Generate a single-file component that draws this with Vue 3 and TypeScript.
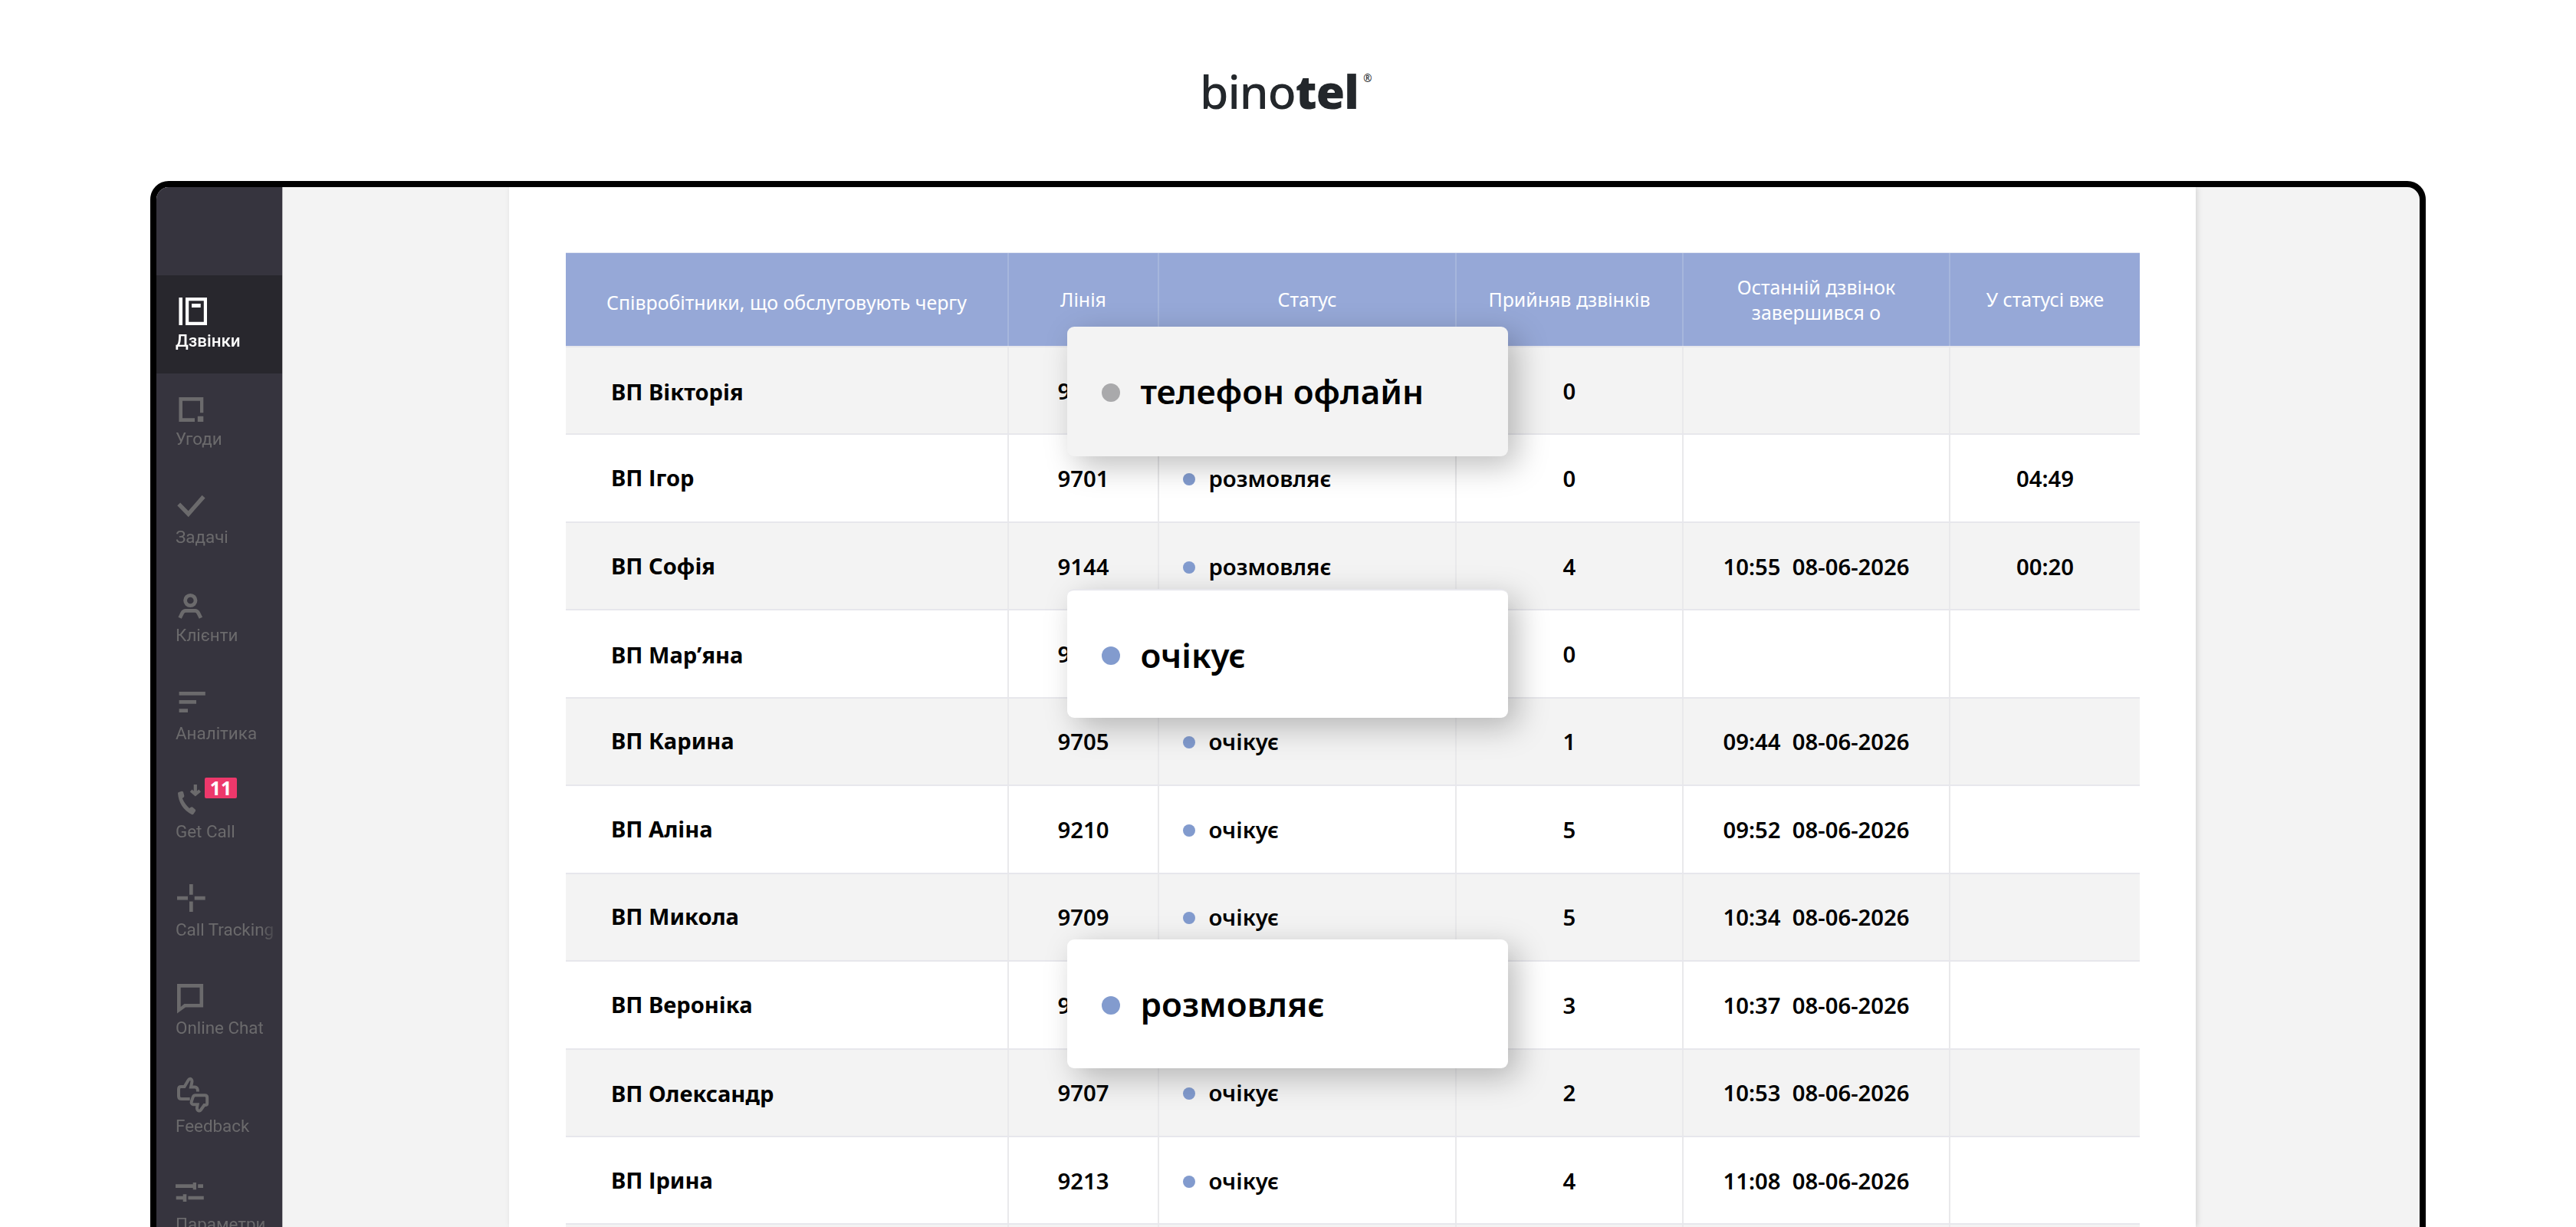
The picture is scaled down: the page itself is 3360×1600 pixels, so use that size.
<script setup lang="ts">
interface MenuItem {
  label: string
  icon: string
  stroke?: number
  active?: boolean
  badge?: string
}

interface Employee {
  name: string
  line: string
  status: string
  calls: string
  last: string
  since: string
  nudge: number
}

interface Callout {
  label: string
  top: number
  height: number
  tone: 'offline' | 'ready' | 'talking'
}

// Icons with a stroke value are outlined, all others are filled.
const menu: MenuItem[] = [
  { label: 'Дзвінки', active: true, icon: 'M5.4 9H10V45H5.4ZM14 9H42V45H14ZM18.2 13.3V40.7H37.8V13.3ZM22 17H33.7V22H22Z' },
  { label: 'Угоди', icon: 'M5.4 11H37.3V31.3H33V15.7H10V38.3H26V43H5.4ZM29.8 35.7H37.3V43H29.8Z' },
  { label: 'Задачі', stroke: 5.4, icon: 'M5.2 22.4L17.7 35.2L37.6 12.6' },
  { label: 'Клієнти', stroke: 4.8, icon: 'M27 20a6.7 6.7 0 1 1-13.4 0a6.7 6.7 0 1 1 13.4 0ZM6.6 42.7L9.6 36.6Q11.2 33.4 14 33.4H26.5Q29.3 33.4 30.9 36.6L33.9 42.7' },
  { label: 'Аналітика', icon: 'M5.6 11H39.8V15.7H5.6ZM5.6 22H28V26.7H5.6ZM5.6 33.3H17V38H5.6Z' },
  { label: 'Get Call', badge: '11', icon: 'M4 15.5Q4 14.4 5.2 14L9 12.8Q10.6 12.6 11.2 14.2L12.4 19Q12.4 20.4 9.8 22Q13 29.5 19 35Q21.4 32.4 23.2 33.6L26.6 36.6Q27.5 37.6 26.9 38.8L24.4 42.6Q23.5 43.7 22 43Q5.6 34.5 4 15.5ZM24.7 4H28.9V12.6L31.4 10.6L34 13.4L26.8 19.6L19.8 13.4L22.4 10.6L24.7 12.6Z' },
  { label: 'Call Tracking', icon: 'M19 6H23.7V19.8H19ZM19 28.6H23.7V42H19ZM3 21.7H17V26.6H3ZM25.7 21.7H39.7V26.6H25.7Z' },
  { label: 'Online Chat', icon: 'M3 8H37.1V38.6H14L3 46.6ZM7.7 12.7V38L12.3 34H32.5V12.7Z' },
  { label: 'Feedback', stroke: 4, icon: 'M19.7 30H9Q5 30 5 26.4V17.2Q5 14 8.2 14H12.6L17.6 5.6Q19.6 2.6 21.6 4.6Q22.8 6 22.3 8.4L21 14.6H26.4Q30 15 30 20.4M27 25.2H39Q42.2 25.2 42.2 28.2V35.4Q42.2 38 39.6 38H38.4L34 44.2Q32 46.8 29.8 44.6Q28.6 43.2 29 41L29.7 37.2H24.2Q21 36.8 21.8 33.4L23.6 27.8Q24.4 25.2 27 25.2Z' },
  { label: 'Параметри', icon: 'M1 13.3H23.7V11H28V20.2H23.7V18H1ZM30.2 13.3H37V18H30.2ZM1.7 28.7H10.7V26.3H15.3V36H10.7V33.3H1.7ZM17.4 28.7H37.8V33.3H17.4Z' },
]

const columns = [
  'Співробітники, що обслуговують чергу',
  'Лінія',
  'Статус',
  'Прийняв дзвінків',
  'Останній дзвінок\nзавершився о',
  'У статусі вже',
]

const employees: Employee[] = [
  { name: 'ВП Вікторія', line: '9700', status: '', calls: '0', last: '', since: '', nudge: 1 },
  { name: 'ВП Ігор', line: '9701', status: 'розмовляє', calls: '0', last: '', since: '04:49', nudge: -1 },
  { name: 'ВП Софія', line: '9144', status: 'розмовляє', calls: '4', last: '10:55  08-06-2026', since: '00:20', nudge: -1 },
  { name: 'ВП Мар’яна', line: '9704', status: '', calls: '0', last: '', since: '', nudge: 1 },
  { name: 'ВП Карина', line: '9705', status: 'очікує', calls: '1', last: '09:44  08-06-2026', since: '', nudge: -1 },
  { name: 'ВП Аліна', line: '9210', status: 'очікує', calls: '5', last: '09:52  08-06-2026', since: '', nudge: -1 },
  { name: 'ВП Микола', line: '9709', status: 'очікує', calls: '5', last: '10:34  08-06-2026', since: '', nudge: -1 },
  { name: 'ВП Вероніка', line: '9706', status: '', calls: '3', last: '10:37  08-06-2026', since: '', nudge: -1 },
  { name: 'ВП Олександр', line: '9707', status: 'очікує', calls: '2', last: '10:53  08-06-2026', since: '', nudge: 1 },
  { name: 'ВП Ірина', line: '9213', status: 'очікує', calls: '4', last: '11:08  08-06-2026', since: '', nudge: -1 },
  { name: '', line: '', status: '', calls: '', last: '', since: '', nudge: 0 },
]

const callouts: Callout[] = [
  { label: 'телефон офлайн', top: 182, height: 169, tone: 'offline' },
  { label: 'очікує', top: 524, height: 168, tone: 'ready' },
  { label: 'розмовляє', top: 981, height: 168, tone: 'talking' },
]
</script>

<template>
  <div class="page">
    <header class="brand">
      <div class="logo"><span class="thin">bino</span><span class="heavy">tel</span><span class="reg">®</span></div>
    </header>

    <div class="device">
      <nav class="sidebar">
        <a v-for="item in menu" :key="item.label" class="item" :class="{ active: item.active }">
          <svg
            class="icon"
            viewBox="0 0 48 52"
            :fill="item.stroke ? 'none' : 'currentColor'"
            :stroke="item.stroke ? 'currentColor' : 'none'"
            :stroke-width="item.stroke"
            fill-rule="evenodd"
          >
            <path :d="item.icon" />
          </svg>
          <span class="label">{{ item.label }}</span>
          <span v-if="item.badge" class="badge">{{ item.badge }}</span>
        </a>
      </nav>

      <main class="content">
        <section class="panel">
          <div class="table">
            <div class="row head">
              <div v-for="title in columns" :key="title" class="cell">{{ title }}</div>
            </div>
            <div v-for="(e, i) in employees" :key="i" class="row">
              <div class="cell name"><span :style="{ transform: `translateY(${e.nudge}px)` }">{{ e.name }}</span></div>
              <div class="cell">{{ e.line }}</div>
              <div class="cell status">
                <template v-if="e.status"><i class="dot" />{{ e.status }}</template>
              </div>
              <div class="cell">{{ e.calls }}</div>
              <div class="cell">{{ e.last }}</div>
              <div class="cell">{{ e.since }}</div>
            </div>
          </div>
        </section>

        <div
          v-for="c in callouts"
          :key="c.label"
          class="callout"
          :class="c.tone"
          :style="{ top: `${c.top}px`, height: `${c.height}px` }"
        >
          <i class="dot" />{{ c.label }}
        </div>
      </main>
    </div>
  </div>
</template>

<style>
body {
  margin: 0;
  background: #fff;
}
</style>

<style scoped>
.page {
  width: 3360px;
  height: 1600px;
  overflow: hidden;
  display: flex;
  flex-direction: column;
  background: #fff;
  color: #000;
  font-family: "Noto Sans", sans-serif;
}

.brand {
  flex: none;
  height: 236px;
  box-sizing: border-box;
  padding: 79px 0 0 1565px;
}

.logo {
  display: flex;
  align-items: flex-start;
  font-size: 60.5px;
  line-height: 80px;
  color: #23272b;
}

.thin {
  font-weight: 500;
  letter-spacing: -1px;
}

.heavy {
  font-weight: 900;
  letter-spacing: -0.8px;
}

.reg {
  margin: 16px 0 0 6px;
  font-size: 13.5px;
  line-height: 15px;
}

.device {
  flex: 1;
  min-height: 0;
  margin: 0 196px;
  box-sizing: border-box;
  border: 8px solid #000;
  border-bottom: 0;
  border-radius: 24px 24px 0 0;
  overflow: hidden;
  display: flex;
  background: #f3f3f3;
}

.sidebar {
  flex: none;
  width: 164px;
  padding-top: 115px;
  box-sizing: border-box;
  background: #36343e;
  box-shadow: 1px 0 0 #bcbcbe;
}

.item {
  position: relative;
  display: flex;
  flex-direction: column;
  height: 128px;
  box-sizing: border-box;
  padding: 20px 0 0 24px;
  color: #6b6a6c;
}

.item.active {
  background: #28272d;
  color: #fff;
}

.icon {
  display: block;
  width: 48px;
  height: 52px;
}

.label {
  margin-top: -1px;
  padding-left: 1px;
  font-family: Roboto, sans-serif;
  font-size: 22.4px;
  line-height: 28px;
  white-space: nowrap;
  width: 139px;
  -webkit-mask-image: linear-gradient(to right, #000 112px, transparent 138px);
  mask-image: linear-gradient(to right, #000 112px, transparent 138px);
}

.active .label {
  font-weight: 500;
}

.badge {
  position: absolute;
  left: 63px;
  top: 15px;
  width: 42px;
  height: 27px;
  border-radius: 2px;
  background: #ed386b;
  color: #fff;
  font-size: 25px;
  font-weight: 700;
  line-height: 26px;
  text-align: center;
}

.content {
  position: relative;
  flex: 1;
  min-width: 0;
}

.panel {
  width: 2200px;
  height: 100%;
  margin-left: 296px;
  padding: 85px 0 0 74px;
  box-sizing: border-box;
  background: #fff;
  box-shadow: 2px 0 7px rgba(0, 0, 0, 0.13);
}

.table {
  width: 2053px;
}

.row {
  display: grid;
  grid-template-columns: 578px 196px 388px 296px 348px 247px;
  height: 114.45px;
  box-sizing: border-box;
  border-bottom: 2px solid #e7e7ec;
  background: #fff;
  font-size: 29.3px;
  font-weight: 600;
  line-height: 40px;
}

.row:nth-child(even) {
  background: #f3f3f3;
}

.row.head {
  height: 124px;
  border-top: 1px solid #e3e7f2;
  background: #96a8d7;
  color: #fff;
  font-size: 24.9px;
  font-weight: 400;
  line-height: 33.5px;
}

.cell {
  display: flex;
  align-items: center;
  justify-content: center;
  box-sizing: border-box;
  padding-top: 1px;
  text-align: center;
  white-space: pre;
  border-right: 2px solid #e9e9eb;
}

.head .cell {
  border-right-color: #a6b6dc;
}

.head .cell:first-child {
  padding-top: 8px;
}

.row .cell:last-child {
  border-right: 0;
}

.cell.name {
  justify-content: flex-start;
  padding-left: 59px;
  font-size: 29.1px;
  font-weight: 700;
}

.cell.status {
  justify-content: flex-start;
  padding-left: 31px;
}

.dot {
  flex: none;
  border-radius: 50%;
  background: #829bce;
}

.status .dot {
  width: 16px;
  height: 16px;
  margin: 2px 17.5px 0 0;
}

.callout {
  position: absolute;
  left: 1024px;
  width: 575px;
  box-sizing: border-box;
  padding-left: 45px;
  display: flex;
  align-items: center;
  border-radius: 9px;
  background: #fff;
  box-shadow: 12px 12px 40px rgba(0, 0, 0, 0.26);
  font-size: 44px;
  font-weight: 600;
  line-height: 60px;
  white-space: pre;
}

.callout.offline {
  padding-bottom: 1px;
  background: #f3f3f3;
}

.callout.ready {
  padding-top: 1px;
  border-top: 2px solid #e7e7ec;
}

.callout .dot {
  width: 24px;
  height: 24px;
  margin: 3px 26.5px 0 0;
}

.offline .dot {
  background: #a9a9ab;
}
</style>
